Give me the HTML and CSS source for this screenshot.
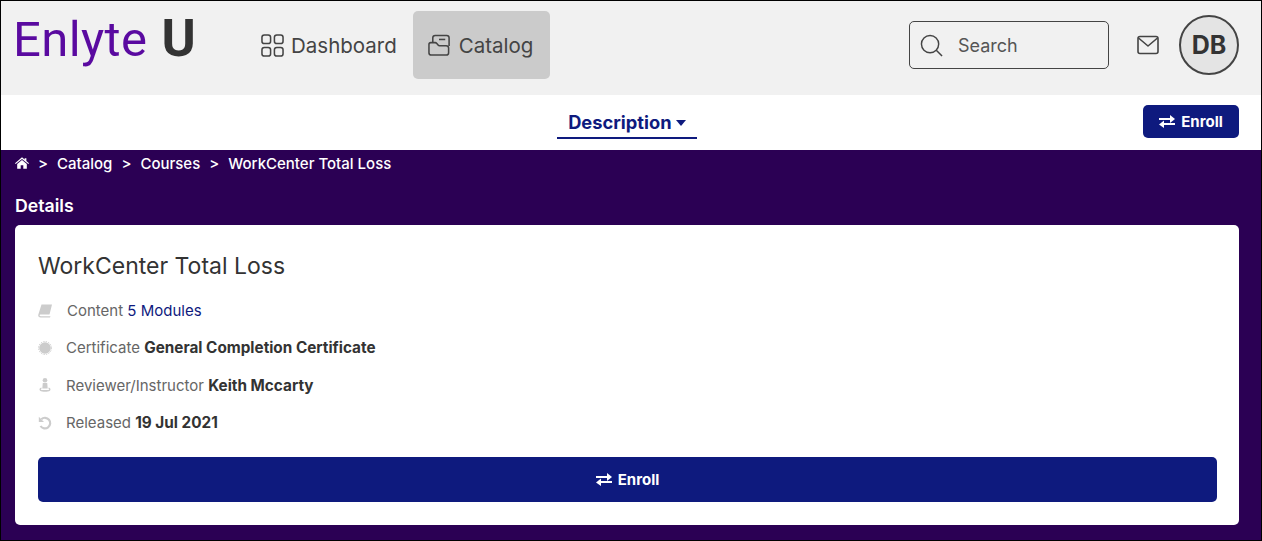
FILE: index.html
```html
<!DOCTYPE html>
<html lang="en">
<head>
  <meta charset="UTF-8">
  <title>WorkCenter Total Loss - Enlyte U</title>
  <link rel="stylesheet" href="styles.css">
</head>
<body>
  <div class="page">
    <!-- Top navigation -->
    <header class="topbar">
      <div class="logo"><span class="logo-name">Enlyte</span><b class="logo-u">U</b></div>
      <nav class="main-nav">
        <a class="nav-item">
          <svg class="nav-icon" viewBox="0 0 24 24" fill="none" stroke="#444" stroke-width="1.6">
            <rect x="1" y="1" width="9" height="9" rx="2.5"/><rect x="14" y="1" width="9" height="9" rx="2.5"/>
            <rect x="1" y="14" width="9" height="9" rx="2.5"/><rect x="14" y="14" width="9" height="9" rx="2.5"/>
          </svg>
          Dashboard
        </a>
        <a class="nav-item active">
          <svg class="nav-icon" viewBox="0 0 24 24" fill="none" stroke="#444" stroke-width="1.6" stroke-linejoin="round">
            <path d="M1 11c0-1.300.8-2 2-2h4.500c.8 0 1.200.3 1.700.9l1.300 1.600c.4.5.9.7 1.500.7h7c1.600 0 2.500.9 2.500 2.500v4.800c0 1.600-.9 2.500-2.500 2.500H3.500C1.900 22 1 21.100 1 19.500z"/>
            <path d="M5 9V4c0-1.600.9-2.500 2.500-2.500h12c1.600 0 2.500.9 2.500 2.500v8.500"/>
            <path d="M11.500 5.700h6.500"/>
          </svg>
          Catalog
        </a>
      </nav>
      <div class="search">
        <svg class="search-icon" viewBox="0 0 24 24" fill="none" stroke="#444" stroke-width="1.500">
          <circle cx="10.500" cy="10.500" r="9"/><path d="M17 17l6 6"/>
        </svg>
        <span>Search</span>
      </div>
      <svg class="mail-icon" viewBox="0 0 22 20" fill="none" stroke="#444" stroke-width="1.600" stroke-linejoin="round">
        <rect x="1" y="1.500" width="20" height="17" rx="2"/><path d="M1.500 3l9.500 8 9.500-8"/>
      </svg>
      <div class="avatar">DB</div>
    </header>

    <!-- Sub navigation -->
    <div class="subbar">
      <div class="tab">Description <span class="caret"></span></div>
      <button class="btn btn-small">
        <svg class="swap-icon" viewBox="0 0 16 13" fill="currentColor"><path d="M0 3h11V0l5 4-5 4V5H0zM16 8H5V5.500L0 9.500l5 3.500v-3h11z"/></svg>
        Enroll
      </button>
    </div>

    <!-- Course content -->
    <main class="content">
      <div class="breadcrumb">
        <svg class="home-icon" viewBox="0 0 16 13" fill="#fff"><path d="M8 0l3 2.500V1h2v3.200L16 6.800l-.8.9L8 1.800.8 7.700 0 6.800zM8 3.200l5.500 4.500V13H9.500V9h-3v4h-4V7.700z"/></svg>
        <span class="sep">&gt;</span><span>Catalog</span>
        <span class="sep">&gt;</span><span>Courses</span>
        <span class="sep">&gt;</span><span>WorkCenter Total Loss</span>
      </div>
      <h2 class="section-title">Details</h2>
      <section class="card">
        <h1 class="course-title">WorkCenter Total Loss</h1>
        <ul class="facts">
          <li>
            <svg class="fact-icon" viewBox="0 0 14 14" fill="#ccc"><path d="M3.500 .5H14l-2.500 10H3C1.800 10.500 1.500 11 1.600 11.500s.6.800 1.400.8h9.500L12 13.500H2.500C1 13.500 0 12.500 .2 11z"/></svg>
            <p class="fact-text fact-first">Content <span class="link">5 Modules</span></p>
          </li>
          <li>
            <svg class="fact-icon" viewBox="0 0 14 14" fill="#ccc"><circle cx="7" cy="7" r="5.800"/><circle cx="7" cy="7" r="6.500" fill="none" stroke="#ccc" stroke-width="1" stroke-dasharray="1.300 1.250"/></svg>
            <p class="fact-text">Certificate <b>General Completion Certificate</b></p>
          </li>
          <li>
            <svg class="fact-icon" viewBox="0 0 14 14" fill="#ccc"><circle cx="7" cy="2.300" r="2.300"/><path d="M4.800 5h4.400l.5 5.500H4.300z"/><path d="M3.500 9.500C1.200 10 .9 12 2.300 13c1.400.9 8 .9 9.400 0 1.400-1 1.100-3-1.200-3.500v1.200c.8.300.8 1-.2 1.200-1 .2-5.600.2-6.600 0-1-.2-1-.9-.2-1.200z"/></svg>
            <p class="fact-text">Reviewer/Instructor <b>Keith Mccarty</b></p>
          </li>
          <li>
            <svg class="fact-icon" viewBox="0 0 14 14" fill="none" stroke="#ccc" stroke-width="2.200"><path d="M3.300 3.200A5.300 5.300 0 1 1 2.500 10"/><path d="M.8 .8v5.200H6" fill="#ccc" stroke="none"/></svg>
            <p class="fact-text">Released <b>19 Jul 2021</b></p>
          </li>
        </ul>
        <button class="btn btn-wide">
          <svg class="swap-icon" viewBox="0 0 16 13" fill="currentColor"><path d="M0 3h11V0l5 4-5 4V5H0zM16 8H5V5.500L0 9.500l5 3.500v-3h11z"/></svg>
          Enroll
        </button>
      </section>
    </main>
  </div>
</body>
</html>
```

FILE: styles.css
```css
* {
  box-sizing: border-box;
}
body {
  margin: 0;
  font-family: 'Inter', 'Liberation Sans', sans-serif;
  color: #333;
}
.page {
  width: 1262px;
  height: 541px;
  border: 1px solid #000;
  display: flex;
  flex-direction: column;
  overflow: hidden;
}
.topbar {
  flex: none;
  height: 94px;
  background: #f1f1f1;
  display: flex;
  align-items: center;
  padding: 0 22px 6px 12px;
}
.logo {
  width: 232px;
  font-size: 49px;
  line-height: 50px;
  font-family: 'Roboto', sans-serif;
  letter-spacing: 0.4px;
  margin-top: -12px;
  white-space: nowrap;
}
.logo-name {
  color: #5a0aa0;
}
.logo-u {
  color: #333;
  margin-left: 14px;
  font-size: 52px;
  line-height: 1;
  font-weight: 700;
}
.main-nav {
  display: flex;
  flex: 1;
}
.nav-item {
  display: flex;
  align-items: center;
  gap: 7px;
  height: 68px;
  padding: 0 16px;
  border-radius: 5px;
  font-size: 20.5px;
  color: #444;
}
.nav-item.active {
  background: #cbcbcb;
  gap: 8px;
  padding: 0 17px 0 15px;
}
.nav-icon {
  width: 23px;
  height: 23px;
}
.search {
  width: 200px;
  height: 48px;
  border: 1px solid #444;
  border-radius: 5px;
  display: flex;
  align-items: center;
  padding-left: 10px;
  gap: 15px;
  font-size: 18px;
  color: #555;
}
.search-icon {
  width: 23px;
  height: 23px;
}
.mail-icon {
  width: 22px;
  height: 20px;
  margin-left: 28px;
}
.avatar {
  width: 60px;
  height: 60px;
  margin-left: 20px;
  border: 2px solid #444;
  border-radius: 50%;
  background: #e4e4e4;
  display: flex;
  align-items: center;
  justify-content: center;
  font-size: 25px;
  font-weight: 700;
}
.subbar {
  flex: none;
  height: 55px;
  background: #fff;
  position: relative;
  display: flex;
  justify-content: flex-end;
  align-items: flex-start;
  padding: 10px 22px 0 0;
}
.tab {
  position: absolute;
  left: 556px;
  top: 14px;
  width: 140px;
  height: 30px;
  border-bottom: 2px solid #0e1a7e;
  text-align: center;
  color: #0e1a7e;
  font-size: 18.3px;
  font-weight: 700;
  line-height: 27px;
}
.caret {
  display: inline-block;
  vertical-align: 3px;
  border: 5px solid transparent;
  border-top: 6px solid #0e1a7e;
  border-bottom: 0;
}
.btn {
  display: flex;
  align-items: center;
  justify-content: center;
  gap: 6px;
  background: #0e1a7e;
  color: #fff;
  border: none;
  border-radius: 5px;
  font-family: inherit;
  font-size: 15px;
  font-weight: 700;
}
.btn-small {
  width: 96px;
  height: 33px;
}
.btn-wide {
  width: 100%;
  height: 45px;
}
.swap-icon {
  width: 16px;
  height: 13px;
}
.content {
  flex: 1;
  min-height: 0;
  background: #2b0054;
  padding: 0 22px 15px 14px;
  display: flex;
  flex-direction: column;
}
.breadcrumb {
  flex: none;
  display: flex;
  align-items: center;
  height: 26px;
  color: #fff;
  font-size: 15px;
  font-weight: 500;
}
.home-icon {
  width: 14px;
  height: 12px;
}
.sep {
  margin: 0 9px;
}
.section-title {
  flex: none;
  margin: 18px 0 7px;
  height: 24px;
  color: #fff;
  font-size: 17.7px;
  font-weight: 600;
  line-height: 24px;
}
.card {
  flex: 1;
  min-height: 0;
  background: #fff;
  border-radius: 5px;
  padding: 24px 22px 23px 23px;
}
.course-title {
  margin: 0 0 8px;
  font-size: 23px;
  font-weight: 400;
  line-height: 35px;
  color: #333;
}
.facts {
  list-style: none;
  margin: 0 0 16px;
  padding: 0;
}
.facts li {
  display: flex;
  align-items: center;
  height: 37.300px;
}
.fact-text {
  margin: 0;
  font-size: 15px;
  color: #666;
  white-space: nowrap;
}
.fact-icon {
  width: 14px;
  height: 14px;
  margin-right: 14px;
}
.fact-first {
  margin-left: 1px;
}
.facts b {
  font-size: 15.3px;
  font-weight: 700;
  color: #333;
}
.link {
  color: #0e1a7e;
}
```
